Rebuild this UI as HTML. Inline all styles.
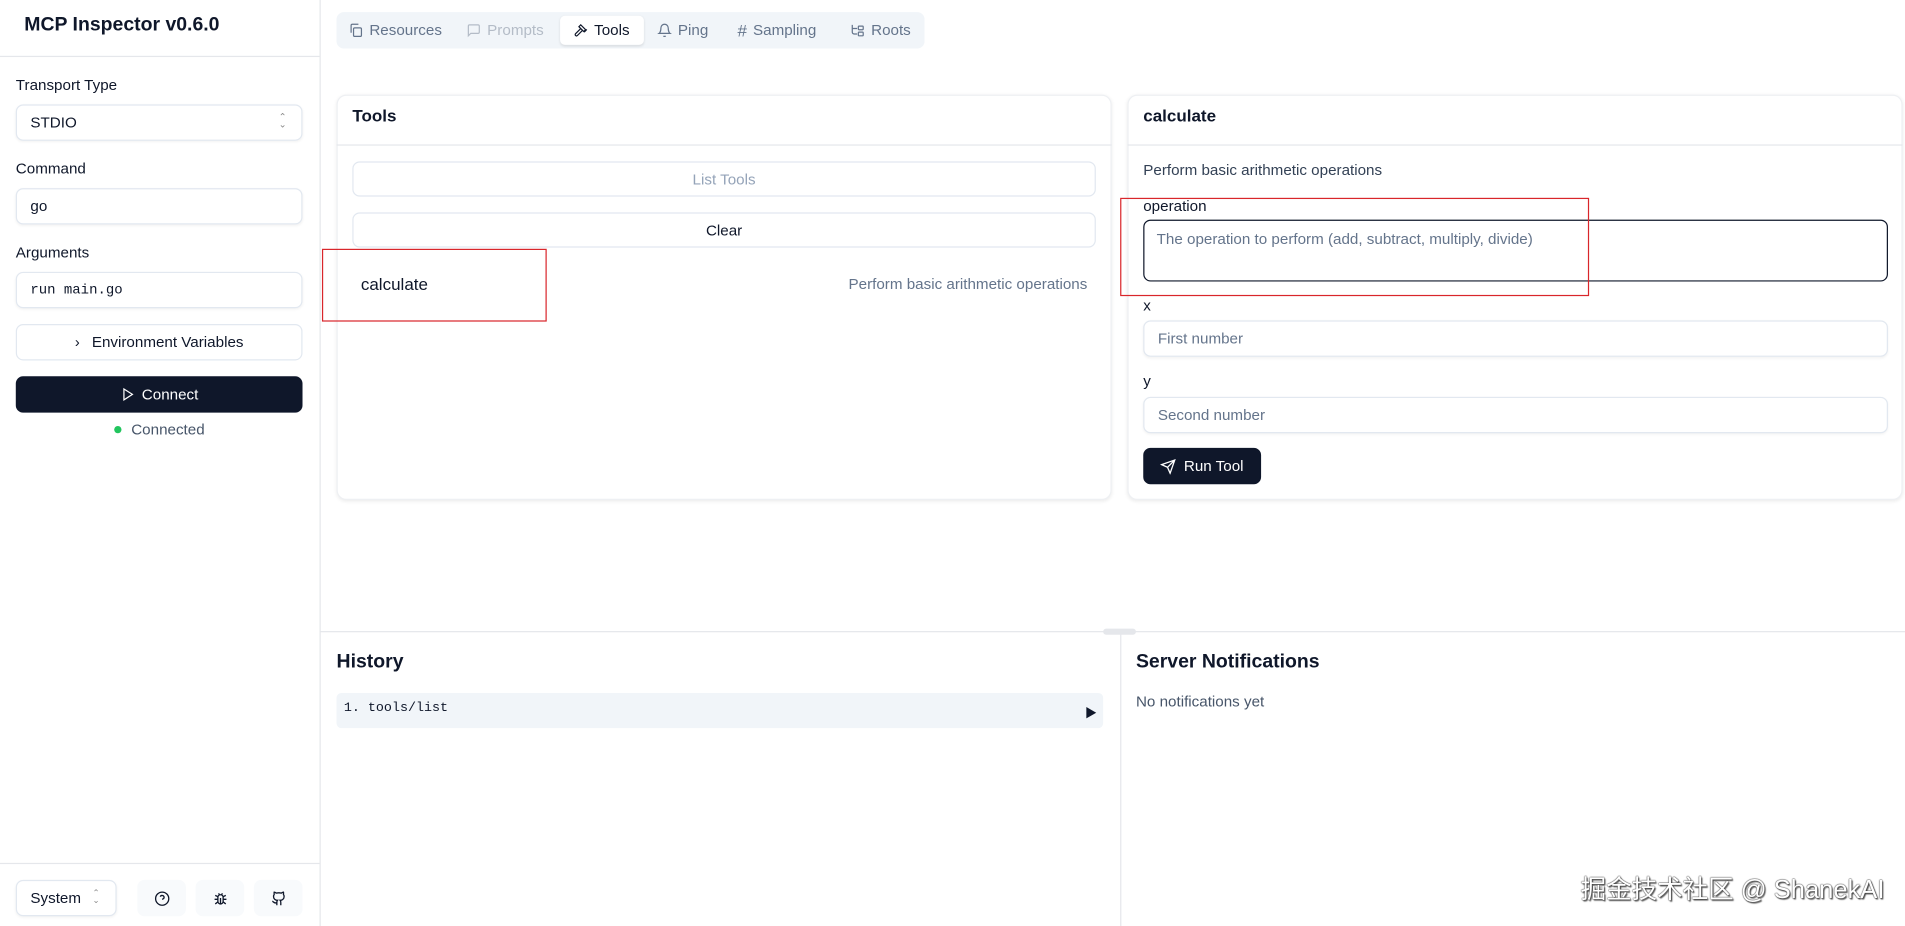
<!DOCTYPE html>
<html><head><meta charset="utf-8"><style>
*{box-sizing:border-box;margin:0;padding:0}
html,body{width:1905px;height:926px;overflow:hidden;background:#fff}
#w{width:1568px;height:763px;transform:scale(1.21492,1.2136);transform-origin:0 0;position:relative;font-family:"Liberation Sans","Noto Sans CJK SC",sans-serif;color:#0f172a;font-size:12.5px}
.a{position:absolute}
.inp{position:absolute;border:1px solid #e2e8f0;border-radius:6px;background:#fff;box-shadow:0 1px 2px rgba(0,0,0,.05);display:flex;align-items:center;padding-left:11px;font-size:12.5px}
.lbl{position:absolute;font-size:12.5px}
.card{position:absolute;border:1px solid #eef0f3;border-radius:8px;box-shadow:0 1px 3px rgba(0,0,0,.08);background:#fff}
.btn{position:absolute;border:1px solid #e2e8f0;border-radius:6px;display:flex;align-items:center;justify-content:center;font-size:12.5px;background:#fff}
.tab{position:absolute;top:14px;height:21px;display:flex;align-items:center;gap:5px;font-size:12.5px;color:#64748b}
svg{display:block}
.red{position:absolute;border:1.5px solid #d9262b}
</style></head><body><div id="w">
<div class="a" style="left:263px;top:0;width:1px;height:763px;background:#e5e7eb"></div>
<div class="a" style="left:0;top:46px;width:263px;height:1px;background:#e5e7eb"></div>
<div class="a" style="left:20px;top:12px;font-size:16px;font-weight:bold">MCP Inspector v0.6.0</div>
<div class="lbl" style="left:13px;top:63px">Transport Type</div>
<div class="inp" style="left:13px;top:86px;width:236px;height:30px">STDIO<span style="position:absolute;right:12px;top:7px;font-size:8px;color:#888;line-height:6px">⌃<br>⌄</span></div>
<div class="lbl" style="left:13px;top:132px">Command</div>
<div class="inp" style="left:13px;top:155px;width:236px;height:30px">go</div>
<div class="lbl" style="left:13px;top:201px">Arguments</div>
<div class="inp" style="left:13px;top:224px;width:236px;height:30px;font-family:'Liberation Mono',monospace;font-size:11.5px">run main.go</div>
<div class="btn" style="left:13px;top:267px;width:236px;height:30px;gap:10px"><span style="font-size:12px">›</span>Environment Variables</div>
<div class="btn" style="left:13px;top:310px;width:236px;height:30px;background:#0f172a;border-color:#0f172a;color:#fff;gap:6px"><svg width="12" height="12" viewBox="0 0 24 24" fill="none" stroke="#fff" stroke-width="2"><path d="M6 3l14 9-14 9z"/></svg>Connect</div>
<div class="a" style="left:94px;top:351px;width:6px;height:6px;border-radius:50%;background:#22c55e"></div>
<div class="lbl" style="left:108px;top:347px;color:#475569">Connected</div>
<div class="a" style="left:0;top:711px;width:263px;height:1px;background:#e5e7eb"></div>
<div class="inp" style="left:13px;top:725px;width:83px;height:30px">System<span style="position:absolute;right:13px;top:8px;font-size:7px;color:#888;line-height:6px">⌃<br>⌄</span></div>
<div class="btn" style="left:113px;top:725px;width:40px;height:30px;border:none;background:#f8fafc"><svg width="13" height="13" viewBox="0 0 24 24" fill="none" stroke="#0f172a" stroke-width="2"><circle cx="12" cy="12" r="10"/><path d="M9.1 9a3 3 0 0 1 5.8 1c0 2-3 3-3 3M12 17h.01"/></svg></div>
<div class="btn" style="left:161px;top:725px;width:40px;height:30px;border:none;background:#f8fafc"><svg width="13" height="13" viewBox="0 0 24 24" fill="none" stroke="#0f172a" stroke-width="2"><rect x="8" y="6" width="8" height="14" rx="4"/><path d="M12 20v-9M3 13h5M16 13h5M4 7l4 2M20 7l-4 2M4 20l4-3M20 20l-4-3M9 4l1.5 2M15 4l-1.5 2"/></svg></div>
<div class="btn" style="left:209px;top:725px;width:40px;height:30px;border:none;background:#f8fafc"><svg width="13" height="13" viewBox="0 0 24 24" fill="none" stroke="#0f172a" stroke-width="2"><path d="M15 22v-4a4.8 4.8 0 0 0-1-3.5c3 0 6-2 6-5.5.1-1.3-.3-2.5-1-3.5.3-1.2.3-2.4 0-3.5 0 0-1 0-3 1.5-2.6-.5-5.4-.5-8 0C6 2 5 2 5 2c-.3 1.1-.3 2.3 0 3.5-.7 1-1.1 2.2-1 3.5 0 3.5 3 5.5 6 5.5-.4.5-.7 1.1-.8 1.7-.2.6-.2 1.2-.2 1.8v4M9 18c-4.5 2-5-2-7-2"/></svg></div>
<div class="a" style="left:277px;top:10px;width:484px;height:30px;background:#f1f5f9;border-radius:6px"></div>
<div class="a" style="left:461px;top:13px;width:69px;height:24px;background:#fff;border-radius:4px;box-shadow:0 1px 2px rgba(0,0,0,.1)"></div>
<div class="tab" style="left:287px"><svg width="12" height="12" viewBox="0 0 24 24" fill="none" stroke="#64748b" stroke-width="2"><rect x="8" y="8" width="13" height="14" rx="2"/><path d="M4 16V4a2 2 0 0 1 2-2h10"/></svg>Resources</div>
<div class="tab" style="left:384px;color:#b4bcc7"><svg width="12" height="12" viewBox="0 0 24 24" fill="none" stroke="#b4bcc7" stroke-width="2"><path d="M21 15a2 2 0 0 1-2 2H7l-4 4V5a2 2 0 0 1 2-2h14a2 2 0 0 1 2 2z"/></svg>Prompts</div>
<div class="tab" style="left:472px;color:#0f172a"><svg width="12" height="12" viewBox="0 0 24 24" fill="none" stroke="#0f172a" stroke-width="2"><path d="M15 12l-8.5 8.5a2.1 2.1 0 0 1-3-3L12 9M17.6 15L22 10.6M20 11l-8-8-3 3 8 8z"/></svg>Tools</div>
<div class="tab" style="left:541px"><svg width="12" height="12" viewBox="0 0 24 24" fill="none" stroke="#64748b" stroke-width="2"><path d="M6 8a6 6 0 0 1 12 0c0 7 3 9 3 9H3s3-2 3-9M10.3 21a1.9 1.9 0 0 0 3.4 0"/></svg>Ping</div>
<div class="tab" style="left:607px"><span style="font-size:14px">#</span> Sampling</div>
<div class="tab" style="left:700px"><svg width="12" height="12" viewBox="0 0 24 24" fill="none" stroke="#64748b" stroke-width="2"><path d="M3 3v12a3 3 0 0 0 3 3h5M3 9h8"/><rect x="13" y="5" width="8" height="6" rx="1"/><rect x="13" y="15" width="8" height="6" rx="1"/></svg>Roots</div>
<div class="card" style="left:277px;top:78px;width:638px;height:334px"></div>
<div class="a" style="left:290px;top:87px;font-size:14px;font-weight:bold">Tools</div>
<div class="a" style="left:277px;top:119px;width:638px;height:1px;background:#e5e7eb"></div>
<div class="btn" style="left:290px;top:133px;width:612px;height:29px;color:#94a3b8">List Tools</div>
<div class="btn" style="left:290px;top:175px;width:612px;height:29px">Clear</div>
<div class="a" style="left:297px;top:226px;font-size:14px">calculate</div>
<div class="a" style="right:673px;top:227px;color:#64748b">Perform basic arithmetic operations</div>
<div class="red" style="left:265px;top:205px;width:185px;height:60px"></div>
<div class="card" style="left:928px;top:78px;width:638px;height:334px"></div>
<div class="a" style="left:941px;top:87px;font-size:14px;font-weight:bold">calculate</div>
<div class="a" style="left:928px;top:119px;width:638px;height:1px;background:#e5e7eb"></div>
<div class="a" style="left:941px;top:133px;color:#334155">Perform basic arithmetic operations</div>
<div class="lbl" style="left:941px;top:163px">operation</div>
<div class="a" style="left:941px;top:181px;width:613px;height:51px;border:1px solid #0f172a;border-radius:6px;padding:8px 10px;color:#64748b">The operation to perform (add, subtract, multiply, divide)</div>
<div class="red" style="left:922px;top:163px;width:386px;height:81px"></div>
<div class="lbl" style="left:941px;top:245px">x</div>
<div class="inp" style="left:941px;top:264px;width:613px;height:30px;color:#64748b">First number</div>
<div class="lbl" style="left:941px;top:307px">y</div>
<div class="inp" style="left:941px;top:327px;width:613px;height:30px;color:#64748b">Second number</div>
<div class="btn" style="left:941px;top:369px;width:97px;height:30px;background:#0f172a;border-color:#0f172a;color:#fff;gap:6px"><svg width="13" height="13" viewBox="0 0 24 24" fill="none" stroke="#fff" stroke-width="2"><path d="M22 2L11 13M22 2l-7 20-4-9-9-4z"/></svg>Run Tool</div>
<div class="a" style="left:263px;top:520px;width:1305px;height:1px;background:#e5e7eb"></div>
<div class="a" style="left:908px;top:518px;width:27px;height:5px;border-radius:3px;background:#e5e7eb"></div>
<div class="a" style="left:922px;top:521px;width:1px;height:242px;background:#e5e7eb"></div>
<div class="a" style="left:277px;top:537px;font-size:16px;font-weight:bold">History</div>
<div class="a" style="left:277px;top:571px;width:631px;height:29px;background:#f1f5f9;border-radius:4px"></div>
<div class="a" style="left:283px;top:578px;font-family:'Liberation Mono',monospace;font-size:11px">1. tools/list</div>
<div class="a" style="left:893px;top:579px;font-size:10px">▶</div>
<div class="a" style="left:935px;top:537px;font-size:16px;font-weight:bold">Server Notifications</div>
<div class="a" style="left:935px;top:571px;color:#475569">No notifications yet</div>
<div class="a" style="left:1301px;top:717px;font-size:21px;color:#fff;text-shadow:0 0 1px #333,0 0 1px #333,1px 1px 1px #555">掘金技术社区 @ ShanekAI</div>
</div></body></html>
